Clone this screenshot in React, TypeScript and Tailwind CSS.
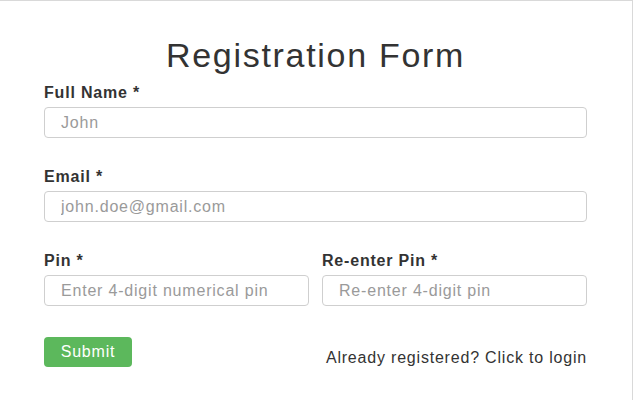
export default function App() {
  return (
    <div className="h-[400px] w-[640px] bg-white font-['Liberation_Sans',Arial,sans-serif] text-[#333]">
      <div className="h-[400px] w-[633px] border-t border-r border-[#d9d9d9]">
        <form className="ml-[44px] flex w-[543px] flex-col pt-[37px]" onSubmit={(e) => e.preventDefault()}>
          <h1 className="text-center text-[34px] leading-[34px] tracking-[1.7px]">Registration Form</h1>

          <div className="mt-[11px] flex flex-col gap-[4px]">
            <label className="text-[16px] leading-[20px] font-bold tracking-[0.8px]">Full Name *</label>
            <Field placeholder="John" />
          </div>

          <div className="mt-[29px] flex flex-col gap-[4px]">
            <label className="text-[16px] leading-[20px] font-bold tracking-[0.8px]">Email *</label>
            <Field placeholder="john.doe@gmail.com" />
          </div>

          <div className="mt-[29px] flex gap-[13px]">
            <div className="flex flex-1 flex-col gap-[4px]">
              <label className="text-[16px] leading-[20px] font-bold tracking-[0.8px]">Pin *</label>
              <Field placeholder="Enter 4-digit numerical pin" />
            </div>
            <div className="flex flex-1 flex-col gap-[4px]">
              <label className="text-[16px] leading-[20px] font-bold tracking-[0.8px]">Re-enter Pin *</label>
              <Field placeholder="Re-enter 4-digit pin" />
            </div>
          </div>

          <div className="mt-[31px] flex items-start justify-between">
            <button
              type="submit"
              className="h-[30px] w-[88px] rounded-[4px] bg-[#5cb85c] text-[16px] tracking-[0.8px] text-white"
            >
              Submit
            </button>
            <a className="mt-[11px] text-[16px] leading-[20px] tracking-[0.8px] text-[#333]">
              Already registered? Click to login
            </a>
          </div>
        </form>
      </div>
    </div>
  );
}

function Field({ placeholder }: { placeholder: string }) {
  return (
    <input
      placeholder={placeholder}
      className="h-[31px] w-full rounded-[4px] border border-[#cfcfcf] pl-[16px] text-[16px] tracking-[0.8px] outline-none placeholder:text-[#9a9a9a]"
    />
  );
}
